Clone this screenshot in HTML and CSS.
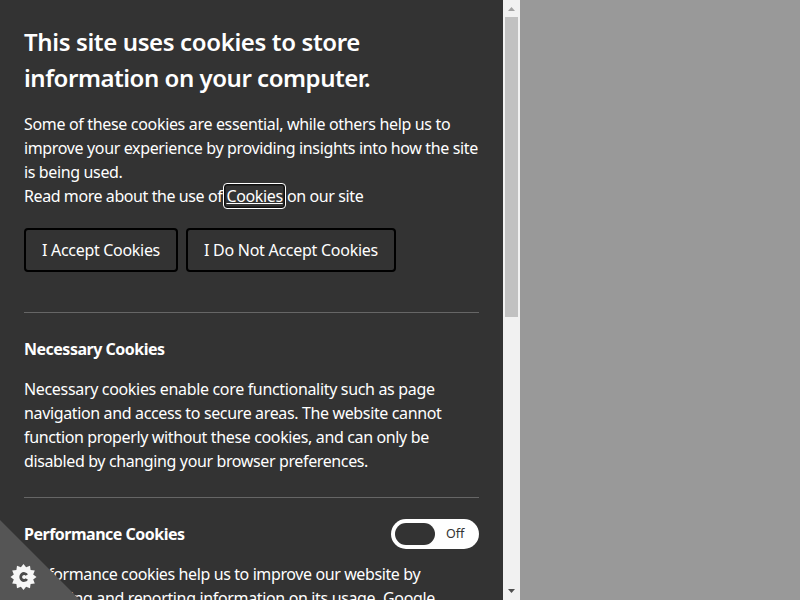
FILE: index.html
```
<!DOCTYPE html>
<html lang="en">
<head>
<meta charset="utf-8">
<title>Cookie settings</title>
<link rel="stylesheet" href="styles.css">
</head>
<body>
<div class="drawer">
  <main class="panel">
    <h1><span class="line t37">This site uses cookies to store</span> <span class="line t47">information on your computer.</span></h1>
    <p><span class="line t33">Some of these cookies are essential, while others help us to</span> <span class="line t36">improve your experience by providing insights into how the site</span> <span class="line t36">is being used.</span> <span class="line"><span class="t42">Read more about the use of</span> <a class="t36" href="#">Cookies</a> <span class="t37">on our site</span></span></p>
    <div class="actions">
      <button class="accept">I Accept Cookies</button>
      <button class="reject">I Do Not Accept Cookies</button>
    </div>
    <section class="first">
      <h2>Necessary Cookies</h2>
      <p><span class="line t33">Necessary cookies enable core functionality such as page</span> <span class="line t36">navigation and access to secure areas. The website cannot</span> <span class="line t36">function properly without these cookies, and can only be</span> <span class="line t37">disabled by changing your browser preferences.</span></p>
    </section>
    <section>
      <div class="heading">
        <h2>Performance Cookies</h2>
        <div class="toggle" role="switch" aria-checked="false"><span class="knob"></span><span class="state">Off</span></div>
      </div>
      <p><span class="line t39">Performance cookies help us to improve our website by</span> <span class="line t35">collecting and reporting information on its usage. Google</span></p>
    </section>
  </main>
  <div class="scrollbar">
    <svg width="17" height="17" viewBox="0 0 17 17"><path d="M5 11L8.5 7L12 11Z" fill="#a3a3a3"/></svg>
    <div class="thumb"></div>
    <svg class="down" width="17" height="17" viewBox="0 0 17 17"><path d="M5 6L12 6L8.5 10Z" fill="#505050"/></svg>
  </div>
</div>
<svg class="corner" width="80" height="80" viewBox="0 0 80 80">
  <path d="M0 0L80 80H0Z" fill="#555"/>
  <g transform="translate(23.5 57)">
    <path fill="#f7f7f7" d="M0-13L2.6-9.7L6.5-11.3L7.1-7.1L11.3-6.5L9.7-2.6L13 0L9.7 2.6L11.3 6.5L7.1 7.1L6.5 11.3L2.6 9.7L0 13L-2.6 9.7L-6.5 11.3L-7.1 7.1L-11.3 6.5L-9.7 2.6L-13 0L-9.7-2.6L-11.3-6.5L-7.1-7.1L-6.5-11.3L-2.6-9.7Z"/>
    <path d="M3.3-1.9A3.3 3.5 0 1 0 3.3 1.9" fill="none" stroke="#4a4a4a" stroke-width="2.8"/>
  </g>
</svg>
</body>
</html>
```
FILE: styles.css
```
body {
  margin: 0;
  height: 600px;
  overflow: hidden;
  background: #999;
  color: #fff;
  font: 16px/24px "Noto Sans", sans-serif;
}
.drawer {
  display: flex;
  width: 520px;
  height: 600px;
  overflow: hidden;
}
.panel {
  box-sizing: border-box;
  width: 503px;
  padding: 24px;
  background: #333;
}
.line {
  display: block;
  white-space: nowrap;
}
.t33 { letter-spacing: -0.33px; }
.t35 { letter-spacing: -0.35px; }
.t36 { letter-spacing: -0.36px; }
.t37 { letter-spacing: -0.375px; }
.t39 { letter-spacing: -0.39px; }
.t42 { letter-spacing: -0.42px; }
.t47 { letter-spacing: -0.47px; }
h1 {
  margin: 0 0 16px;
  font-size: 24px;
  font-weight: 600;
  line-height: 36px;
}
p { margin: 0; }
a {
  color: #fff;
  padding: 1px 2px;
  margin: 0 -2px;
  border-radius: 3px;
  outline: 1px solid #fff;
  box-shadow: inset 0 0 0 1.5px #101010;
}
.actions {
  display: flex;
  gap: 8px;
  margin: 20px 0 40px;
}
button {
  height: 44px;
  padding: 0;
  border: 2px solid #000;
  border-radius: 4px;
  background: #333;
  color: #fff;
  font: inherit;
}
.accept {
  width: 154px;
  letter-spacing: -0.3px;
}
.reject {
  width: 210px;
  letter-spacing: -0.27px;
}
section {
  border-top: 1px solid #666;
  padding-top: 21px;
}
.first {
  padding: 24px 0;
}
h2 {
  margin: 0;
  font-size: 16px;
  font-weight: 700;
  line-height: 24px;
  letter-spacing: -0.5px;
}
.first h2 { margin-bottom: 16px; }
.heading {
  display: flex;
  justify-content: space-between;
  align-items: center;
  height: 30px;
  margin-bottom: 13px;
}
.toggle {
  box-sizing: border-box;
  display: flex;
  align-items: center;
  width: 88px;
  height: 30px;
  padding: 4px;
  border-radius: 15px;
  background: #fff;
}
.knob {
  width: 40px;
  height: 22px;
  border-radius: 11px;
  background: #333;
}
.state {
  margin-left: 11px;
  color: #333;
  font-size: 12.5px;
}
.scrollbar {
  display: flex;
  flex-direction: column;
  width: 17px;
  background: #f1f1f1;
}
.thumb {
  width: 13px;
  height: 300px;
  margin: 0 2px;
  background: #c1c1c1;
}
.down { margin-top: auto; }
.corner {
  position: absolute;
  left: 0;
  bottom: 0;
}
```
